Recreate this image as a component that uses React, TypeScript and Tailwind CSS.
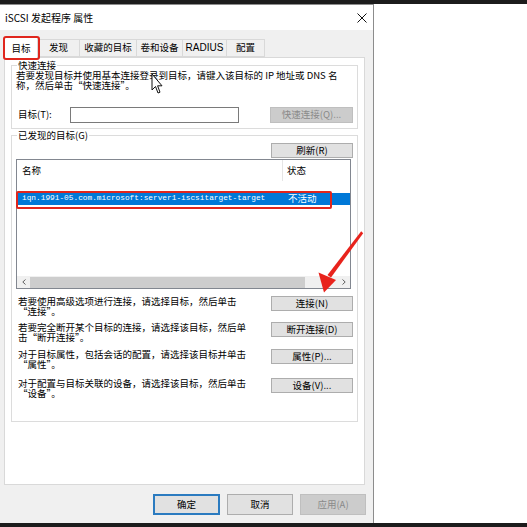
export default function App() {
  return (
    <div className="relative flex h-[527px] w-[527px] flex-col overflow-hidden bg-white font-['Noto_Sans_CJK_SC',sans-serif] text-black">
      {/* top dark strip */}
      <div className="h-[4px] bg-[#1c1c1c]" />

      <div className="flex flex-1">
        {/* dialog */}
        <div className="flex w-[374px] flex-col border-r border-t border-[#8c8c8c] bg-[#f0f0f0]">
          {/* title bar */}
          <div className="flex h-[25px] items-center justify-between bg-white pl-[5px] pr-[5px]">
            <span className="text-[10px] leading-none">iSCSI 发起程序 属性</span>
            <svg width="10" height="10" viewBox="0 0 10 10" className="mr-[1px]">
              <path d="M0.5 0.5L9.5 9.5M9.5 0.5L0.5 9.5" stroke="#111" strokeWidth="1" />
            </svg>
          </div>

          {/* body */}
          <div className="flex flex-1 flex-col pl-[4px] pb-[8px] pt-[7px]">
            {/* tabs */}
            <div className="flex h-[20px] items-end text-[9.5px] leading-none">
              <div className="relative z-10 -mb-[1px] flex h-[21px] w-[34px] items-center justify-center border border-b-0 border-[#d9d9d9] bg-white pt-[1px]">
                目标
                <div className="absolute -left-[2px] -top-[2px] h-[24px] w-[37px] rounded-[3px] border-2 border-[#e0261d]" />
              </div>
              <div className="flex h-[18px] w-[42px] items-center justify-center border border-l-0 border-[#d9d9d9]">发现</div>
              <div className="flex h-[18px] w-[57px] items-center justify-center border border-l-0 border-[#d9d9d9]">收藏的目标</div>
              <div className="flex h-[18px] w-[46px] items-center justify-center border border-l-0 border-[#d9d9d9]">卷和设备</div>
              <div className="flex h-[18px] w-[44px] items-center justify-center border border-l-0 border-[#d9d9d9] font-['Liberation_Sans',sans-serif] text-[10px]">RADIUS</div>
              <div className="flex h-[18px] w-[38px] items-center justify-center border border-l-0 border-[#d9d9d9]">配置</div>
            </div>

            {/* tab panel */}
            <div className="w-[361px] flex-1 border border-[#d9d9d9] bg-white px-[6px] pt-[2px] text-[9.5px]">
              {/* quick connect */}
              <fieldset className="border border-[#dcdcdc] px-[4px] pb-[5px]">
                <legend className="ml-[1px] px-[1px] leading-[10px]">快速连接</legend>
                <p className="leading-[10px]">
                  若要发现目标并使用基本连接登录到目标，请键入该目标的 IP 地址或 DNS 名
                  <br />
                  称，然后单击“快速连接”。
                </p>
                <div className="mt-[17px] flex h-[16px] items-center">
                  <span className="ml-[2px] w-[52px] leading-none">目标(T):</span>
                  <div className="h-[16px] w-[169px] border border-[#7a7a7a] bg-white" />
                  <button className="ml-auto flex h-[16px] w-[83px] items-center justify-center border border-[#bfbfbf] bg-[#cccccc] text-[9.5px] leading-none text-[#8a8a8a]">
                    快速连接(Q)...
                  </button>
                </div>
              </fieldset>

              {/* discovered targets */}
              <fieldset className="mt-[1px] border border-[#dcdcdc] px-[4px] pb-[23px]">
                <legend className="ml-[1px] px-[1px] leading-[10px]">已发现的目标(G)</legend>
                <div className="mt-[3px] flex justify-end">
                  <button className="flex h-[15px] w-[82px] items-center justify-center border border-[#adadad] bg-[#e1e1e1] text-[9.5px] leading-none">
                    刷新(R)
                  </button>
                </div>

                {/* list view */}
                <div className="relative mt-[1px] flex h-[130px] w-[335px] flex-col border border-[#828790] bg-white">
                  <div className="flex h-[21px] items-center">
                    <div className="flex h-full w-[266px] items-center border-r border-[#e5e5e5] pl-[5px]">名称</div>
                    <div className="pl-[4px]">状态</div>
                  </div>
                  <div className="mt-[12px] flex h-[12px] items-center bg-[#0078d7] text-white">
                    <div className="w-[266px] pl-[5px] font-['Liberation_Mono',monospace] text-[7.8px] leading-none">
                      iqn.1991-05.com.microsoft:server1-iscsitarget-target
                    </div>
                    <div className="pl-[5px] leading-none">不活动</div>
                  </div>
                  <div className="flex-1" />
                  <div className="flex h-[12px] items-center bg-[#f0f0f0]">
                    <div className="flex w-[13px] justify-center">
                      <svg width="4" height="6" viewBox="0 0 4 6">
                        <path d="M3.5 0.5L0.8 3L3.5 5.5" fill="none" stroke="#606060" strokeWidth="1" />
                      </svg>
                    </div>
                    <div className="h-[11px] w-[275px] bg-[#cdcdcd]" />
                    <div className="flex-1" />
                    <div className="flex w-[13px] justify-center">
                      <svg width="4" height="6" viewBox="0 0 4 6">
                        <path d="M0.5 0.5L3.2 3L0.5 5.5" fill="none" stroke="#606060" strokeWidth="1" />
                      </svg>
                    </div>
                  </div>
                  {/* annotation around the selected row */}
                  <div className="absolute -left-[1px] top-[31px] h-[18px] w-[316px] rounded-[2px] border-2 border-[#e0261d]" />
                </div>

                {/* actions */}
                <div className="mt-[7px] flex flex-col">
                  <div className="flex h-[26px] items-start justify-between pl-[2px]">
                    <p className="leading-[10px]">
                      若要使用高级选项进行连接，请选择目标，然后单击
                      <br />
                      “连接”。
                    </p>
                    <button className="flex h-[15px] w-[82px] items-center justify-center border border-[#adadad] bg-[#e1e1e1] text-[9.5px] leading-none">
                      连接(N)
                    </button>
                  </div>
                  <div className="flex h-[27px] items-start justify-between pl-[2px]">
                    <p className="leading-[10px]">
                      若要完全断开某个目标的连接，请选择该目标，然后单
                      <br />
                      击“断开连接”。
                    </p>
                    <button className="flex h-[15px] w-[82px] items-center justify-center border border-[#adadad] bg-[#e1e1e1] text-[9.5px] leading-none">
                      断开连接(D)
                    </button>
                  </div>
                  <div className="flex h-[29px] items-start justify-between pl-[2px]">
                    <p className="leading-[10px]">
                      对于目标属性，包括会话的配置，请选择该目标并单击
                      <br />
                      “属性”。
                    </p>
                    <button className="flex h-[15px] w-[82px] items-center justify-center border border-[#adadad] bg-[#e1e1e1] text-[9.5px] leading-none">
                      属性(P)...
                    </button>
                  </div>
                  <div className="flex h-[20px] items-start justify-between pl-[2px]">
                    <p className="leading-[10px]">
                      对于配置与目标关联的设备，请选择该目标，然后单击
                      <br />
                      “设备”。
                    </p>
                    <button className="flex h-[15px] w-[82px] items-center justify-center border border-[#adadad] bg-[#e1e1e1] text-[9.5px] leading-none">
                      设备(V)...
                    </button>
                  </div>
                </div>
              </fieldset>
            </div>

            {/* dialog buttons */}
            <div className="mt-[9px] flex justify-end gap-[7px] pr-[7px] text-[9.5px]">
              <button className="flex h-[21px] w-[67px] items-center justify-center border-2 border-[#2b7bc0] bg-[#e1e1e1] leading-none">
                确定
              </button>
              <button className="flex h-[21px] w-[66px] items-center justify-center border border-[#adadad] bg-[#e1e1e1] leading-none">
                取消
              </button>
              <button className="flex h-[21px] w-[66px] items-center justify-center border border-[#bfbfbf] bg-[#cccccc] leading-none text-[#8a8a8a]">
                应用(A)
              </button>
            </div>
          </div>
        </div>
        <div className="flex-1 bg-white" />
      </div>

      {/* bottom dark strip */}
      <div className="h-[4px] bg-[#1c1c1c]" />

      {/* mouse cursor */}
      <svg className="absolute left-[151px] top-[73px]" width="12" height="22" viewBox="0 0 12 22">
        <path d="M1 1L1 17L4.5 13.5L7 20L9 19.2L6.6 12.8L11 12.8Z" fill="white" stroke="#111" strokeWidth="1" strokeLinejoin="round" />
      </svg>

      {/* red arrow annotation */}
      <svg className="absolute left-0 top-0" width="527" height="527" viewBox="0 0 527 527">
        <path d="M361.2 231.2L363.2 233.2L331 277.5L327.5 275Z" fill="#e8231c" />
        <path d="M324 292.5L318.5 272.5L336 280Z" fill="#e8231c" />
      </svg>
    </div>
  );
}
